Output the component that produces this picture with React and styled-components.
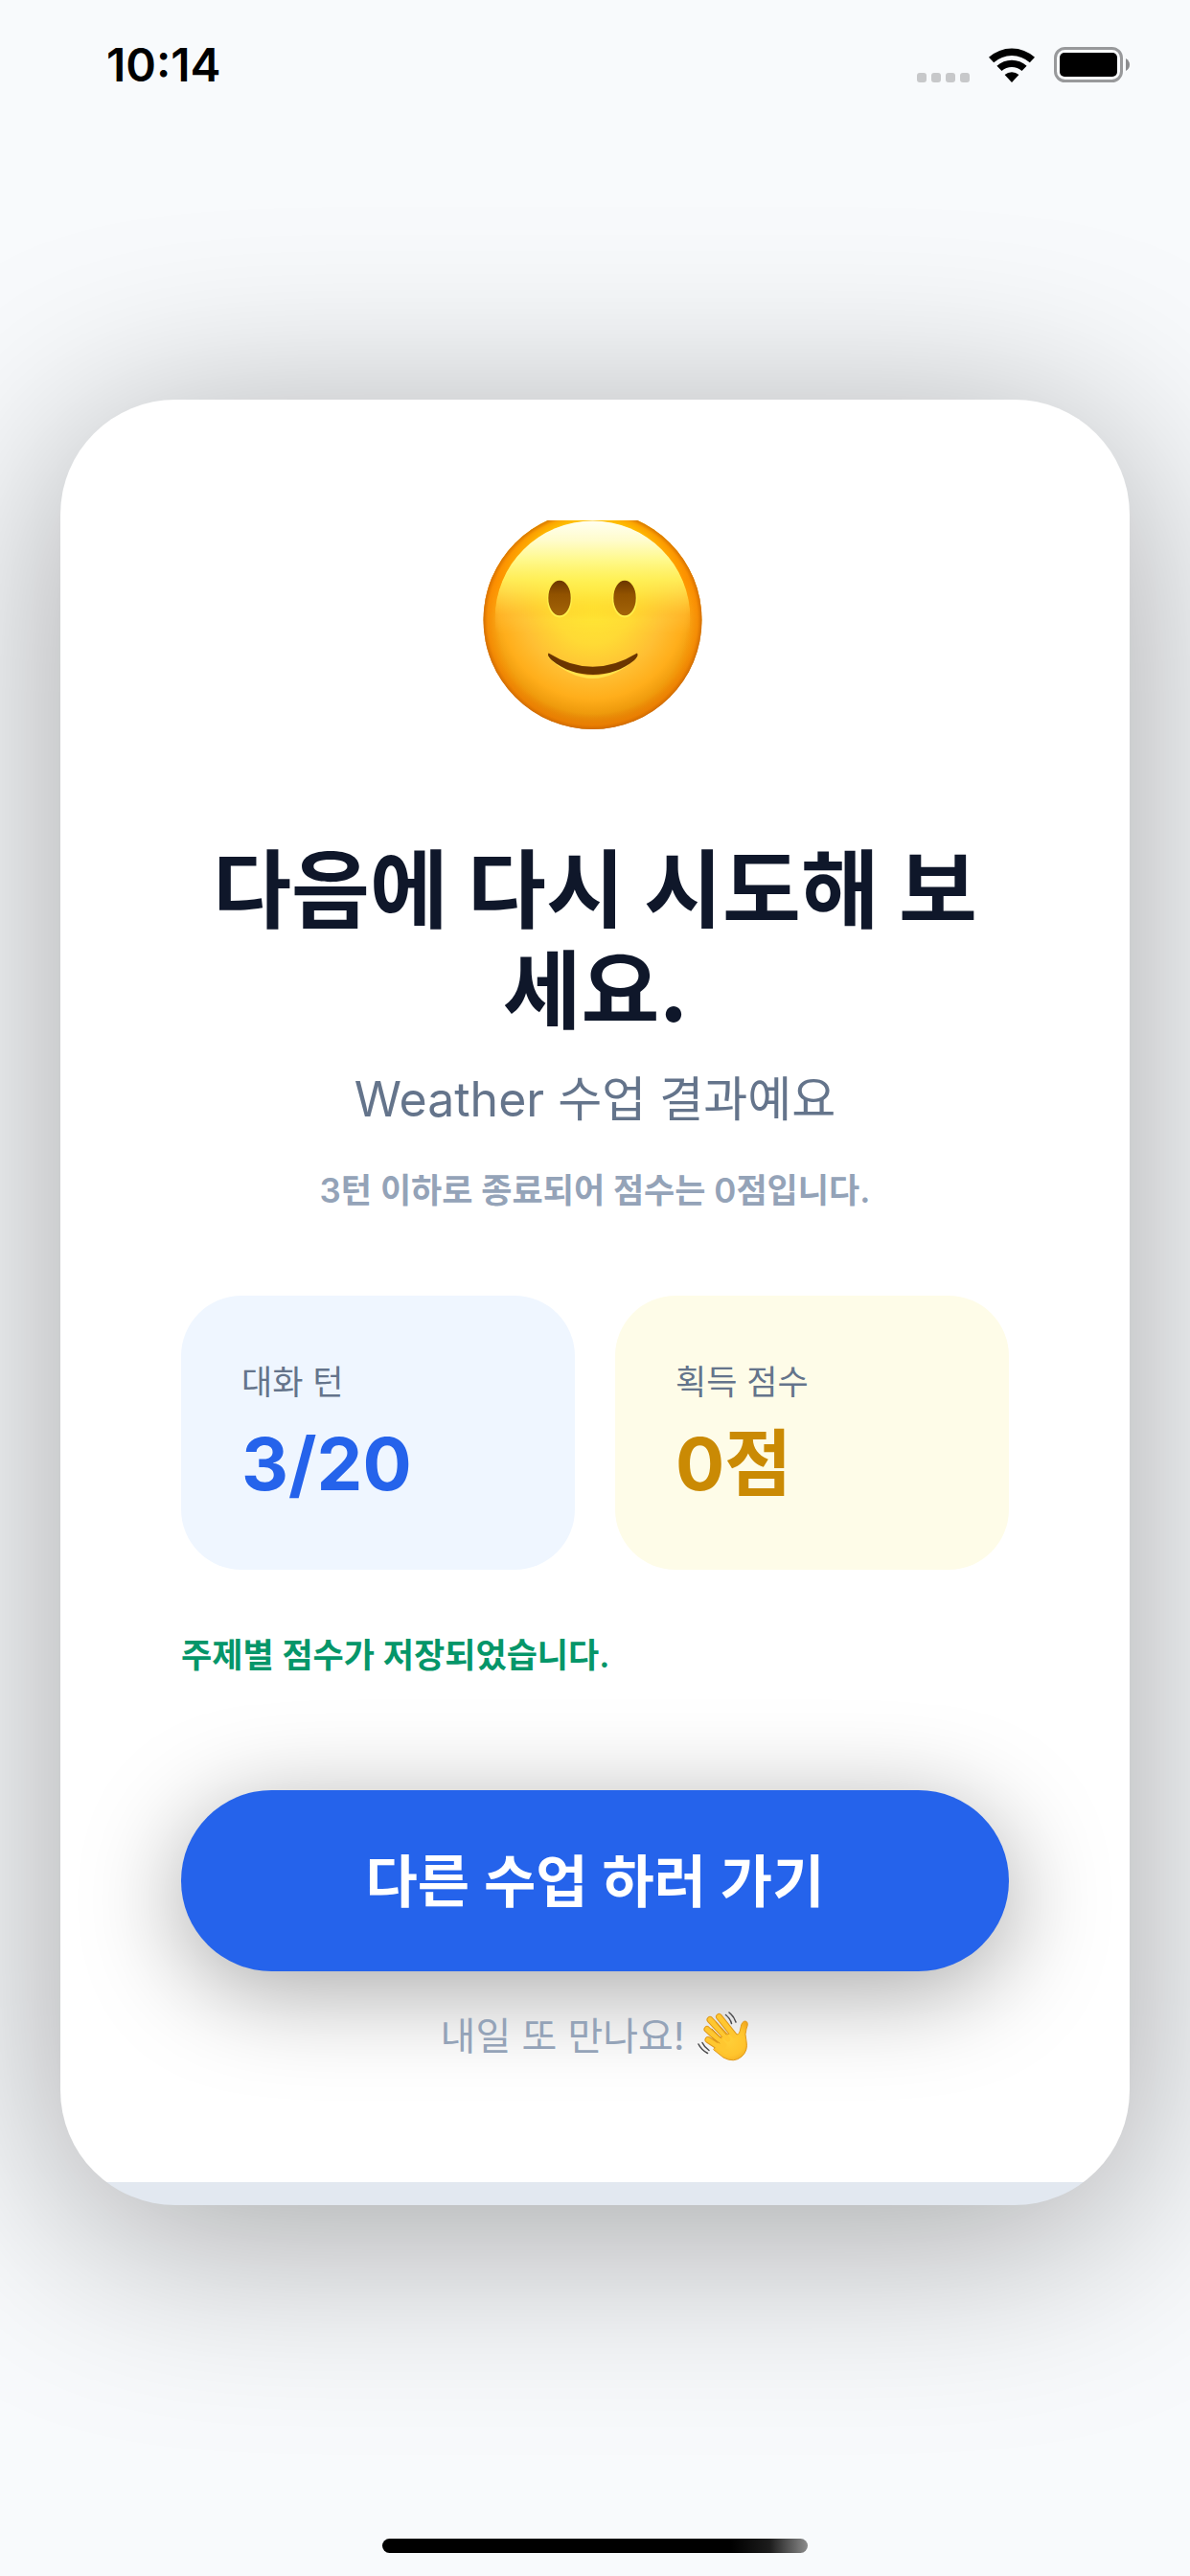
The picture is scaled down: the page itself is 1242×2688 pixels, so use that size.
import styled, { createGlobalStyle } from "styled-components";

const GlobalStyle = createGlobalStyle`
    * {
        box-sizing: border-box;
    }

    body {
        margin: 0;
        background: #f8fafc;
        font-family: Inter, "Noto Sans CJK KR", sans-serif;
    }

    h1, p, dl, dt, dd {
        margin: 0;
    }
`;

const Screen = styled.div`
    min-height: 100vh;
    display: flex;
    flex-direction: column;
    overflow: hidden;
`;

const StatusBar = styled.header`
    height: 132px;
    padding: 3px 63px 0 111px;
    display: flex;
    align-items: center;
    justify-content: space-between;
`;

const Time = styled.time`
    font-size: 48px;
    font-weight: 600;
    line-height: 56px;
    color: #000;
`;

const StatusIcons = styled.div`
    display: flex;
    align-items: center;
    gap: 20px;
`;

const Main = styled.main`
    flex: 1;
    padding: 0 63px;
    display: flex;
    flex-direction: column;
    justify-content: center;
`;

const Card = styled.section`
    padding: 126px 126px 150px;
    display: flex;
    flex-direction: column;
    border-radius: 120px;
    background: linear-gradient(#e2e8f0, #e2e8f0) bottom / 100% 24px no-repeat #fff;
    box-shadow: 0 30px 210px rgba(0, 0, 0, 0.35);
`;

const FaceIcon = styled.svg`
    width: 236px;
    height: 252px;
    margin-bottom: 75px;
    align-self: center;
`;

const Title = styled.h1`
    font-family: "Noto Sans CJK KR", sans-serif;
    font-size: 89px;
    font-weight: 700;
    line-height: 105px;
    text-align: center;
    color: #0f172a;
`;

const Subtitle = styled.p`
    margin-top: 30px;
    font-size: 50px;
    line-height: 74px;
    text-align: center;
    color: #64748b;
`;

const Note = styled.p`
    margin-top: 32px;
    font-size: 35px;
    font-weight: 600;
    line-height: 52px;
    text-align: center;
    color: #94a3b8;
`;

const Stats = styled.dl`
    margin-top: 84px;
    display: grid;
    grid-template-columns: 1fr 1fr;
    gap: 42px;
`;

const Stat = styled.div`
    padding: 64px 63px 63px;
    border-radius: 63px;
    color: ${(props) => props.$color};
    background: ${(props) => props.$background};
`;

const StatLabel = styled.dt`
    font-size: 35px;
    line-height: 52px;
    color: #64748b;
`;

const StatValue = styled.dd`
    padding-top: 12px;
    font-size: 76px;
    font-weight: 700;
    line-height: 95px;
`;

const Saved = styled.p`
    margin-top: 63px;
    font-size: 35px;
    font-weight: 600;
    line-height: 52px;
    color: #059669;
`;

const NextButton = styled.button`
    height: 189px;
    margin-top: 115px;
    padding: 0 0 6px;
    border: 0;
    border-radius: 95px;
    font-family: inherit;
    font-size: 59px;
    font-weight: 600;
    color: #fff;
    background: #2563eb;
    box-shadow: 0 20px 104px rgba(0, 0, 0, 0.35);
    cursor: pointer;
`;

const Goodbye = styled.p`
    margin-top: 42px;
    display: flex;
    align-items: center;
    justify-content: center;
    gap: 14px;
    font-size: 40px;
    line-height: 52px;
    color: #94a3b8;
`;

const HomeArea = styled.footer`
    height: 102px;
    padding-bottom: 24px;
    display: flex;
    align-items: flex-end;
    justify-content: center;
`;

const HomeIndicator = styled.div`
    width: 444px;
    height: 15px;
    border-radius: 8px;
    background: linear-gradient(90deg, #000 82%, #1c1c1c 91%, #8c8c8c);
`;

function Signal() {
    return (
        <svg width="55" height="36" viewBox="0 0 55 36" fill="#c7c8ca" aria-hidden="true">
            <rect x="0" y="26" width="10" height="10" rx="3" />
            <rect x="15" y="26" width="10" height="10" rx="3" />
            <rect x="30" y="26" width="10" height="10" rx="3" />
            <rect x="45" y="26" width="10" height="10" rx="3" />
        </svg>
    );
}

function Wifi() {
    return (
        <svg width="48" height="36" viewBox="-24 -36 48 36" aria-hidden="true">
            <path d="M-24-26.3A36 36 0 0 1 24-26.3L18.8-20.8A28.3 28.3 0 0 0-18.8-20.8Z" />
            <path d="M-15.6-17.3A23.3 23.3 0 0 1 15.6-17.3L10.5-11.9A15.7 15.7 0 0 0-10.5-11.9Z" />
            <path d="M-7.4-8A11.3 11.3 0 0 1 7.4-8L0 0Z" />
        </svg>
    );
}

function Battery() {
    return (
        <svg width="79" height="37" viewBox="0 0 79 37" aria-hidden="true">
            <rect x="1.5" y="1.5" width="69" height="34" rx="10" fill="none" stroke="#98999b" strokeWidth="3" />
            <rect x="6" y="6" width="60" height="25" rx="5" />
            <path d="M75 12q4 2.5 4 6.5t-4 6.5z" fill="#8b8c8e" />
        </svg>
    );
}

function Face() {
    return (
        <FaceIcon viewBox="0 0 236 252" role="img" aria-label="미소">
            <defs>
                <radialGradient id="skin" gradientUnits="userSpaceOnUse" cx="115.5" cy="90" r="130">
                    <stop offset="0" stopColor="#ffe733" />
                    <stop offset="0.3" stopColor="#ffda35" />
                    <stop offset="0.56" stopColor="#ffbf33" />
                    <stop offset="0.74" stopColor="#ffae1b" />
                    <stop offset="0.86" stopColor="#ee9a0c" />
                    <stop offset="1" stopColor="#c26200" />
                </radialGradient>
                <radialGradient id="edge" gradientUnits="userSpaceOnUse" cx="115.5" cy="104" r="114">
                    <stop offset="0.86" stopColor="#ff8a00" stopOpacity="0" />
                    <stop offset="0.96" stopColor="#f98400" stopOpacity="0.6" />
                    <stop offset="1" stopColor="#d06a00" stopOpacity="0.9" />
                </radialGradient>
                <linearGradient id="rim" x1="0" y1="0" x2="0" y2="1">
                    <stop offset="0.04" stopColor="#ffdc00" />
                    <stop offset="0.16" stopColor="#ffb800" />
                    <stop offset="0.32" stopColor="#ff9c00" />
                    <stop offset="0.5" stopColor="#ff9c00" stopOpacity="0" />
                </linearGradient>
                <linearGradient id="shine" x1="0" y1="0" x2="0" y2="1">
                    <stop offset="0" stopColor="#fffff2" />
                    <stop offset="0.1" stopColor="#fffccc" />
                    <stop offset="0.2" stopColor="#fff98c" />
                    <stop offset="0.3" stopColor="#fff45c" stopOpacity="0.85" />
                    <stop offset="0.48" stopColor="#ffe43a" stopOpacity="0" />
                </linearGradient>
                <radialGradient id="inner" gradientUnits="userSpaceOnUse" cx="115.5" cy="90" r="112">
                    <stop offset="0" stopColor="#ffe733" />
                    <stop offset="0.4" stopColor="#ffdf36" />
                    <stop offset="0.8" stopColor="#ffc540" />
                    <stop offset="1" stopColor="#ffb22c" />
                </radialGradient>
                <linearGradient id="fade" x1="0" y1="0" x2="0" y2="1">
                    <stop offset="0.36" stopColor="#fff" />
                    <stop offset="0.58" stopColor="#000" />
                </linearGradient>
                <mask id="upper">
                    <circle cx="115.5" cy="102.5" r="102" fill="url(#fade)" />
                </mask>
                <linearGradient id="eye" x1="0" y1="0" x2="0" y2="1">
                    <stop offset="0" stopColor="#6b3600" />
                    <stop offset="0.4" stopColor="#915200" />
                    <stop offset="1" stopColor="#a36408" />
                </linearGradient>
            </defs>
            <circle cx="115.5" cy="104" r="114" fill="url(#skin)" />
            <circle cx="115.5" cy="104" r="114" fill="url(#rim)" />
            <circle cx="115.5" cy="104" r="114" fill="url(#edge)" />
            <circle cx="115.5" cy="102.5" r="102" fill="url(#inner)" mask="url(#upper)" />
            <circle cx="115.5" cy="102.5" r="102" fill="url(#shine)" />
            <ellipse cx="81" cy="82" rx="13" ry="19.5" fill="#fff04a" />
            <ellipse cx="149" cy="82" rx="13" ry="19.5" fill="#fff04a" />
            <ellipse cx="81" cy="81" rx="11.7" ry="18.3" fill="url(#eye)" />
            <ellipse cx="149" cy="81" rx="11.7" ry="18.3" fill="url(#eye)" />
            <path d="M70 142Q115.5 185 161 142" fill="none" stroke="#ffe14a" strokeWidth="3" />
            <path d="M69.5 138.5Q115.5 167 162 138.5Q164 141 159 146C135 166 97 166 73 146Q67.5 141 69.5 138.5Z" fill="#6b3500" />
        </FaceIcon>
    );
}

function WavingHand() {
    return (
        <svg width="54" height="52" viewBox="0 0 54 52" fill="none" strokeLinecap="round" role="img" aria-label="안녕">
            <defs>
                <radialGradient id="hand" gradientUnits="userSpaceOnUse" cx="33" cy="30" r="27">
                    <stop offset="0" stopColor="#ffcf38" />
                    <stop offset="0.6" stopColor="#ffc42c" />
                    <stop offset="1" stopColor="#efa31c" />
                </radialGradient>
            </defs>
            {/* darker copy underneath gives the fingers their edges */}
            <g stroke="#e09a1c" strokeWidth="7">
                <path d="M22.5 5.5L38 25" />
                <path d="M13 8.5L32 29" />
                <path d="M10 18.5L28 35" />
                <path d="M11 29.5L30 42" />
            </g>
            <path
                d="M24 27L38 21L41 24Q44 24 45 17Q46 10 50 10Q54 11 51 18Q49 23 51 31Q53 41 46 47Q38 54 27 48L17 40Z"
                fill="url(#hand)"
                stroke="#e09a1c"
            />
            <g stroke="#ffc730" strokeWidth="5">
                <path d="M22.5 5.5L38 25" />
                <path d="M13 8.5L32 29" />
                <path d="M10 18.5L28 35" />
                <path d="M11 29.5L30 42" />
            </g>
            <g stroke="#d99216" strokeWidth="1">
                <path d="M19 11L30 24" />
                <path d="M15 18L25 28" />
                <path d="M15 27L23 33" />
            </g>
            <g stroke="#4a4a4c" strokeWidth="1.5">
                <path d="M29.5 3.5Q34 7 35.5 12.5" />
                <path d="M33 1Q38 5 40 11" />
                <path d="M1 34Q4 40 10.5 43.5" />
                <path d="M5 32.5Q7 37 12 40.5" />
            </g>
        </svg>
    );
}

function App() {
    return (
        <Screen>
            <GlobalStyle />
            <StatusBar>
                <Time>10:14</Time>
                <StatusIcons>
                    <Signal />
                    <Wifi />
                    <Battery />
                </StatusIcons>
            </StatusBar>
            <Main>
                <Card>
                    <Face />
                    <Title>다음에 다시 시도해 보세요.</Title>
                    <Subtitle>Weather 수업 결과예요</Subtitle>
                    <Note>3턴 이하로 종료되어 점수는 0점입니다.</Note>
                    <Stats>
                        <Stat $color="#2563eb" $background="#eff6ff">
                            <StatLabel>대화 턴</StatLabel>
                            <StatValue>3/20</StatValue>
                        </Stat>
                        <Stat $color="#ca8a04" $background="#fefce8">
                            <StatLabel>획득 점수</StatLabel>
                            <StatValue>0점</StatValue>
                        </Stat>
                    </Stats>
                    <Saved>주제별 점수가 저장되었습니다.</Saved>
                    <NextButton type="button">다른 수업 하러 가기</NextButton>
                    <Goodbye>
                        내일 또 만나요! <WavingHand />
                    </Goodbye>
                </Card>
            </Main>
            <HomeArea>
                <HomeIndicator />
            </HomeArea>
        </Screen>
    );
}

export default App;
